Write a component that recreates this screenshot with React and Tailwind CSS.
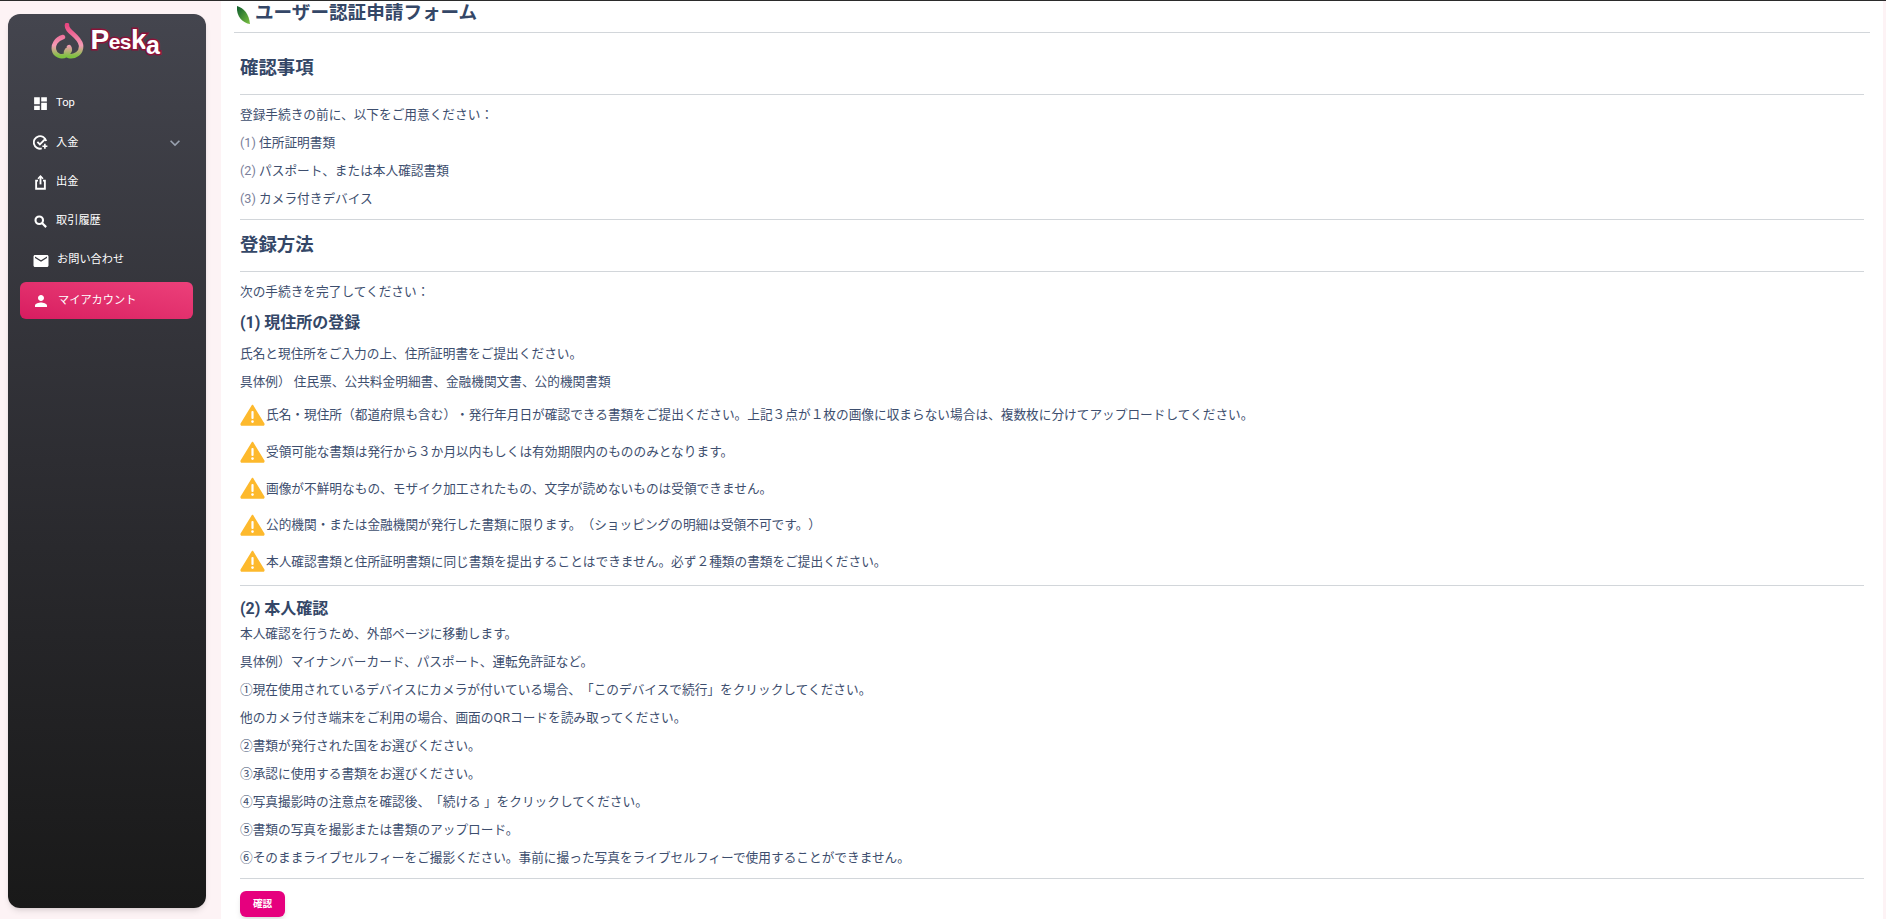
import { MdDashboard, MdEmail, MdPerson, MdExpandMore } from 'react-icons/md';

const DepositIcon = ({ className }) => (
  <svg viewBox="0 0 24 24" className={className} fill="none" stroke="currentColor" strokeWidth="3">
    <path d="M21 9.5A10 10 0 1 0 14 21.5" />
    <path d="M7 11l4 4 8-8" />
    <path d="M19 14v8M15 18h8" strokeWidth="2.6" />
  </svg>
);

const WithdrawIcon = ({ className }) => (
  <svg viewBox="0 0 24 24" className={className} fill="none" stroke="currentColor" strokeWidth="3">
    <path d="M8 9H5v13h14V9h-3" />
    <path d="M12 15V2.5" />
    <path d="M8 6l4-4 4 4" strokeWidth="2.6" />
  </svg>
);

const SearchIcon = ({ className }) => (
  <svg viewBox="0 0 24 24" className={className} fill="none" stroke="currentColor" strokeWidth="3.4">
    <circle cx="10" cy="10" r="6" />
    <path d="M14.5 14.5L21 21" />
  </svg>
);

const navItems = [
  { label: 'Top', icon: MdDashboard, iconClass: 'w-[17px] h-[17px] -ml-[1px] mr-[-1px]' },
  { label: '入金', icon: DepositIcon, iconClass: 'w-[15px] h-[15px]', chevron: true },
  { label: '出金', icon: WithdrawIcon, iconClass: 'w-[15px] h-[15px]' },
  { label: '取引履歴', icon: SearchIcon, iconClass: 'w-[15px] h-[15px]' },
  { label: 'お問い合わせ', icon: MdEmail, iconClass: 'w-[18px] h-[18px] -ml-[1px] mr-[-1px]' },
];

const warnings = [
  '氏名・現住所（都道府県も含む）・発行年月日が確認できる書類をご提出ください。上記３点が１枚の画像に収まらない場合は、複数枚に分けてアップロードしてください。',
  '受領可能な書類は発行から３か月以内もしくは有効期限内のもののみとなります。',
  '画像が不鮮明なもの、モザイク加工されたもの、文字が読めないものは受領できません。',
  '公的機関・または金融機関が発行した書類に限ります。（ショッピングの明細は受領不可です。）',
  '本人確認書類と住所証明書類に同じ書類を提出することはできません。必ず２種類の書類をご提出ください。',
];

const steps = [
  '本人確認を行うため、外部ページに移動します。',
  '具体例）マイナンバーカード、パスポート、運転免許証など。',
  '①現在使用されているデバイスにカメラが付いている場合、「このデバイスで続行」をクリックしてください。',
  '他のカメラ付き端末をご利用の場合、画面のQRコードを読み取ってください。',
  '②書類が発行された国をお選びください。',
  '③承認に使用する書類をお選びください。',
  '④写真撮影時の注意点を確認後、「続ける 」をクリックしてください。',
  '⑤書類の写真を撮影または書類のアップロード。',
  '⑥そのままライブセルフィーをご撮影ください。事前に撮った写真をライブセルフィーで使用することができません。',
];

const WarnIcon = () => (
  <svg viewBox="0 0 25 22" className="w-[25px] h-[22px] shrink-0">
    <path d="M12.5 1.5 L23.8 20 Q24 21 23 21 L2 21 Q1 21 1.2 20 Z" fill="#fdb92d" stroke="#fdb92d" strokeWidth="1.5" strokeLinejoin="round" />
    <rect x="11.4" y="7" width="2.2" height="8" rx="1" fill="#fff" />
    <circle cx="12.5" cy="17.6" r="1.3" fill="#fff" />
  </svg>
);

const Logo = () => (
  <div className="flex items-center justify-center h-[40px] -ml-[3px]">
    <svg viewBox="0 0 34 36" className="w-[34px] h-[36px]">
      <defs>
        <linearGradient id="peach" x1="0" y1="0" x2="0" y2="1">
          <stop offset="0" stopColor="#e8457f" />
          <stop offset="0.65" stopColor="#f59ab5" />
          <stop offset="1" stopColor="#7fc241" />
        </linearGradient>
      </defs>
      <path d="M16 2 C15 9 28 12 30 22 C31 30 24 34 18 33 C15 32 14 30 16 27 M12 14 C5 16 2 22 3 27 C4 32 10 35 15 32 C18 30 20 27 18 24" fill="none" stroke="url(#peach)" strokeWidth="4.5" strokeLinecap="round" />
    </svg>
    <span className="ml-[5px] -mt-[3px] font-['Liberation_Sans',sans-serif] font-bold text-[28px] leading-none text-white tracking-[-0.5px] [-webkit-text-stroke:3px_#8a1238] [paint-order:stroke_fill]">
      P<span className="text-[21px]">es</span>k<span className="relative top-[5px] text-[25px]">a</span>
    </span>
  </div>
);

const Sidebar = () => (
  <aside className="w-[198px] h-[894px] shrink-0 mt-[13px] ml-[8px] rounded-[12px] bg-gradient-to-b from-[#44454e] to-[#191919] via-[#2d2d32] shadow-md px-[12px] pt-[7px]">
    <Logo />
    <nav className="mt-[23px]">
      {navItems.map(({ label, icon: Icon, iconClass, chevron }) => (
        <div key={label} className="flex items-center h-[39.3px] pl-[13px] pr-[9px] text-[11.2px] text-white">
          <Icon className={`shrink-0 ${iconClass}`} />
          <span className="ml-[8px] flex-1">{label}</span>
          {chevron && <MdExpandMore className="w-[20px] h-[20px] text-gray-400" />}
        </div>
      ))}
      <div className="flex items-center h-[37px] mt-[2px] mr-[1px] rounded-[6px] bg-gradient-to-tr from-[#d81b60] to-[#ec407a] pl-[12px] text-[11.2px] text-white">
        <MdPerson className="w-[18px] h-[18px] shrink-0" />
        <span className="ml-[8px]">マイアカウント</span>
      </div>
    </nav>
  </aside>
);

const Rule = ({ className = '' }) => <hr className={`border-t border-[#d2d6da] ${className}`} />;

const Line = ({ children }) => <p className="h-[28px] leading-[28px]">{children}</p>;

const Numbered = ({ n, children }) => (
  <p className="h-[28px] leading-[28px]">
    <span className="text-[#7b809a]">({n})</span> {children}
  </p>
);

export default function App() {
  return (
    <div className="h-[919px] overflow-hidden bg-[#fdf3f5] border-t border-[#2b2b2b] font-['Roboto','Noto_Sans_CJK_JP',sans-serif] text-[12.68px] text-[#3d4e6e] [text-spacing-trim:space-all]">
      <div className="flex">
        <Sidebar />
        <main className="w-[1662px] h-[918px] ml-[15px] bg-white px-[13px] overflow-hidden">
          <div className="flex items-center h-[31px] pb-[7px]">
            <svg viewBox="0 0 14 18" className="w-[14px] h-[18px] ml-[2px] mt-[3px]">
              <defs>
                <linearGradient id="leaf" x1="0" y1="0" x2="1" y2="1">
                  <stop offset="0" stopColor="#0c5a2c" />
                  <stop offset="1" stopColor="#7cc242" />
                </linearGradient>
              </defs>
              <path d="M1 0 C8 2 13 8 14 18 C7 17 0 11 1 0 Z" fill="url(#leaf)" />
            </svg>
            <h1 className="ml-[5px] text-[18.6px] font-bold leading-none text-[#344767]">ユーザー認証申請フォーム</h1>
          </div>
          <Rule />
          <div className="px-[6px]">
            <h2 className="h-[61px] pt-[21px] text-[18.4px] font-bold leading-[27px] text-[#344767]">確認事項</h2>
            <Rule />
            <div className="mt-[6px]">
              <Line>登録手続きの前に、以下をご用意ください：</Line>
              <Numbered n={1}>住所証明書類</Numbered>
              <Numbered n={2}>パスポート、または本人確認書類</Numbered>
              <Numbered n={3}>カメラ付きデバイス</Numbered>
            </div>
            <Rule className="mt-[6px]" />
            <h2 className="h-[51px] pt-[11px] text-[18.4px] font-bold leading-[27px] text-[#344767]">登録方法</h2>
            <Rule />
            <div className="mt-[6px]">
              <Line>次の手続きを完了してください：</Line>
            </div>
            <h3 className="h-[33px] pt-[5px] text-[16px] font-bold leading-[24px] text-[#344767]">(1) 現住所の登録</h3>
            <div className="mt-[1px]">
              <Line>氏名と現住所をご入力の上、住所証明書をご提出ください。</Line>
              <Line>具体例） 住民票、公共料金明細書、金融機関文書、公的機関書類</Line>
            </div>
            <div className="mt-[8px] flex flex-col gap-[14.6px]">
              {warnings.map((text) => (
                <div key={text} className="flex items-center h-[22px]">
                  <WarnIcon />
                  <span className="ml-[1px]">{text}</span>
                </div>
              ))}
            </div>
            <Rule className="mt-[13px]" />
            <h3 className="h-[24px] mt-[11px] text-[16px] font-bold leading-[24px] text-[#344767]">(2) 本人確認</h3>
            <div className="-mt-[1px]">
              {steps.map((text) => (
                <Line key={text}>{text}</Line>
              ))}
            </div>
            <Rule className="mt-[6px]" />
            <button className="block mt-[12px] w-[45px] h-[26px] rounded-[6px] bg-[#e6007e] text-white text-[9.6px] font-bold shadow-md">
              確認
            </button>
          </div>
        </main>
      </div>
    </div>
  );
}
